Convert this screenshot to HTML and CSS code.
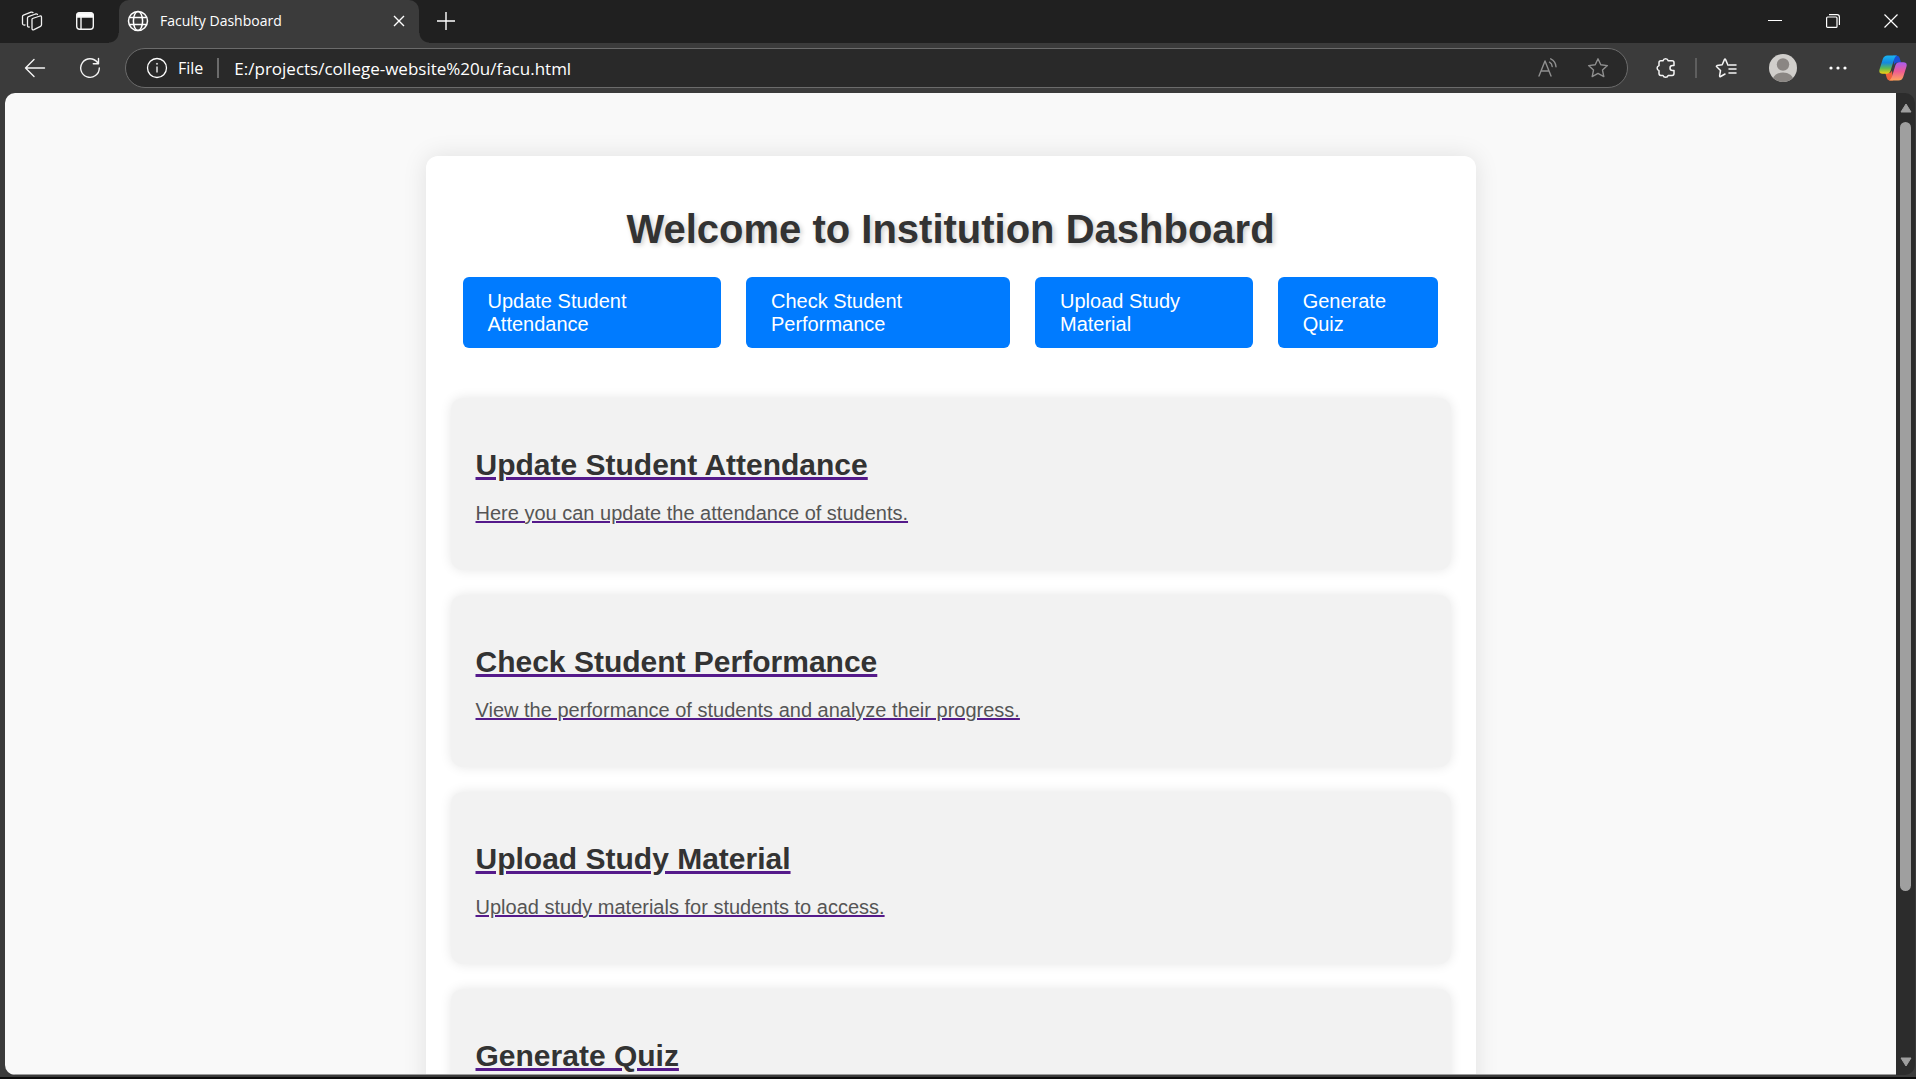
FILE: index.html
```
<!DOCTYPE html>
<html lang="en">
<head>
    <meta charset="UTF-8">
    <meta name="viewport" content="width=device-width, initial-scale=1.0">
    <title>Faculty Dashboard</title>
    <link rel="stylesheet" href="styles.css">
</head>
<body>

    <!-- Tab strip -->
    <div class="tab-strip">
        <div class="strip-buttons">
            <button class="icon-button" aria-label="Workspaces">
                <svg width="22" height="22" viewBox="0 0 22 22" fill="none" stroke="#f0f0f0" stroke-width="1.3" stroke-linejoin="round" stroke-linecap="round">
                    <path d="M11.5 8.5 19 6q1.5-.4 1.5 1.2v7.6q0 1-1 1.500L13 19.600q-2 .7-2-1.200V9.500q0-.7.5-1z"/>
                    <path d="M8.200 17c-1.200.2-1.700-.4-1.700-1.500V8q0-1 1-1.400L14.500 4q1.500-.4 2 .5"/>
                    <path d="M4 15c-1.500.3-2.500-.3-2.500-1.500V6.500q0-1 1-1.400L10 2.200q1.400-.4 2 .4"/>
                </svg>
            </button>
            <button class="icon-button" aria-label="Tab actions">
                <svg width="20" height="20" viewBox="0 0 20 20" fill="none" stroke="#f5f5f5" stroke-width="1.4">
                    <rect x="1.7" y="1.7" width="16.6" height="16.6" rx="3"/>
                    <path d="M2 4.500Q2 2 4.500 2h11Q18 2 18 4.500V6H2z" fill="#fff"/>
                    <path d="M6 6v12"/>
                </svg>
            </button>
        </div>
        <div class="tab">
            <svg width="22" height="22" viewBox="0 0 22 22" fill="none" stroke="#fff" stroke-width="1.5">
                <circle cx="11" cy="11" r="9.5"/>
                <ellipse cx="11" cy="11" rx="4.6" ry="9.5"/>
                <path d="M2.200 7.500h17.600M2.200 14.500h17.600"/>
            </svg>
            <span class="tab-title">Faculty Dashboard</span>
            <button class="icon-button tab-close" aria-label="Close tab">
                <svg width="12" height="12" viewBox="0 0 12 12" stroke="#fff" stroke-width="1.4"><path d="M1 1l10 10M11 1L1 11"/></svg>
            </button>
        </div>
        <button class="icon-button new-tab" aria-label="New tab">
            <svg width="18" height="18" viewBox="0 0 18 18" stroke="#fff" stroke-width="1.4"><path d="M9 0v18M0 9h18"/></svg>
        </button>
        <div class="window-buttons">
            <button class="icon-button" aria-label="Minimize">
                <svg width="14" height="14" viewBox="0 0 14 14" stroke="#fff"><path d="M0 6.500h14"/></svg>
            </button>
            <button class="icon-button" aria-label="Restore">
                <svg width="14" height="14" viewBox="0 0 14 14" fill="none" stroke="#fff" stroke-width="1.2">
                    <rect x=".6" y="3" width="10.4" height="10.4" rx="1"/>
                    <path d="M3 .7h8q2.400 0 2.400 2.400v8"/>
                </svg>
            </button>
            <button class="icon-button" aria-label="Close">
                <svg width="14" height="14" viewBox="0 0 14 14" stroke="#fff" stroke-width="1.2"><path d="M.5.5l13 13M13.500.5l-13 13"/></svg>
            </button>
        </div>
    </div>

    <!-- Address bar -->
    <div class="toolbar">
        <button class="icon-button" aria-label="Back">
            <svg width="22" height="20" viewBox="0 0 22 20" fill="none" stroke="#f5f5f5" stroke-width="1.4" stroke-linecap="round" stroke-linejoin="round"><path d="M20.500 10h-19M10 1.500 1.500 10l8.500 8.500"/></svg>
        </button>
        <button class="icon-button" aria-label="Refresh">
            <svg width="22" height="22" viewBox="0 0 22 22" fill="none" stroke="#f5f5f5" stroke-width="1.4" stroke-linecap="round" stroke-linejoin="round"><path d="M20.300 11A9.300 9.300 0 1 1 18.500 5.500M19.500 1.500v5.200h-5.200"/></svg>
        </button>
        <div class="address-bar">
            <svg width="22" height="22" viewBox="0 0 22 22" fill="none" stroke="#fff" stroke-width="1.3">
                <circle cx="11" cy="11" r="9.5"/>
                <path d="M11 9.500v6"/>
                <circle cx="11" cy="6.8" r=".6" fill="#fff" stroke-width=".6"/>
            </svg>
            <label class="scheme" for="url">File</label>
            <input class="url" id="url" type="text" value="E:/projects/college-website%20u/facu.html">
            <button class="icon-button" aria-label="Read aloud">
                <svg width="22" height="22" viewBox="0 0 22 22" fill="none" stroke="#8f8f8f" stroke-width="1.4" stroke-linecap="round" stroke-linejoin="round">
                    <path d="M2 19 8 4l6 15M4 14h8"/>
                    <path d="M12.500 5.200q2.500 1.300 2.700 4.300M13.700 1.800q5 2.300 5.300 8"/>
                </svg>
            </button>
            <button class="icon-button" aria-label="Favorite">
                <svg width="22" height="22" viewBox="0 0 22 22" fill="none" stroke="#8f8f8f" stroke-width="1.4" stroke-linejoin="round"><path d="M11 1.800l2.800 6 6.600.8-4.900 4.500 1.300 6.500-5.800-3.200-5.800 3.200 1.300-6.500L1.600 8.600l6.600-.8z"/></svg>
            </button>
        </div>
        <div class="tools">
            <button class="icon-button" aria-label="Extensions">
                <svg width="22" height="22" viewBox="0 0 22 22" fill="none" stroke="#f5f5f5" stroke-width="1.5" stroke-linejoin="round"><path d="M8 3.800a2.700 2.700 0 0 1 5.200 0h4q1.800 0 1.800 1.800v3h-1.500a2.500 2.500 0 0 0 0 5H19v3q0 1.800-1.800 1.800h-4a2.700 2.700 0 0 1-5.200 0H5.800Q4 18.400 4 16.600v-3a2.600 2.600 0 0 1 0-5v-3q0-1.800 1.800-1.800z"/></svg>
            </button>
            <span class="divider"></span>
            <button class="icon-button" aria-label="Favorites list">
                <svg width="22" height="22" viewBox="0 0 22 22" fill="none" stroke="#f5f5f5" stroke-width="1.5" stroke-linecap="round" stroke-linejoin="round">
                    <path d="M13 8.200 10.600 2.600Q10 1.600 9.400 2.600L7.200 7.800l-5.200.8q-1 .4-.3 1.200L5.500 13.500l-.9 5.300q0 1.200 1 .7L10 17"/>
                    <path d="M14 8h7M14 12h7M14 16h7"/>
                </svg>
            </button>
            <button class="icon-button" aria-label="Profile">
                <svg width="28" height="28" viewBox="0 0 28 28">
                    <clipPath id="face"><circle cx="14" cy="14" r="14"/></clipPath>
                    <g clip-path="url(#face)">
                        <rect width="28" height="28" fill="#d0cecb"/>
                        <circle cx="14" cy="10.5" r="6.2" fill="#8a8683"/>
                        <ellipse cx="14" cy="26.5" rx="10.5" ry="8" fill="#8a8683"/>
                    </g>
                </svg>
            </button>
            <button class="icon-button" aria-label="Settings and more">
                <svg width="18" height="4" viewBox="0 0 18 4" fill="#fff"><circle cx="2" cy="2" r="1.6"/><circle cx="9" cy="2" r="1.6"/><circle cx="16" cy="2" r="1.6"/></svg>
            </button>
            <button class="icon-button" aria-label="Copilot">
                <svg width="28" height="28" viewBox="0 0 28 28">
                    <defs>
                        <linearGradient id="cool" x1="0" y1="0" x2="0" y2="1"><stop offset="0" stop-color="#19b5f0"/><stop offset=".4" stop-color="#1488e0"/><stop offset=".7" stop-color="#5cba55"/><stop offset="1" stop-color="#f5cf10"/></linearGradient>
                        <linearGradient id="warm" x1="0" y1="0" x2="0" y2="1"><stop offset="0" stop-color="#a85cf0"/><stop offset=".5" stop-color="#ee5a94"/><stop offset="1" stop-color="#ffa45c"/></linearGradient>
                    </defs>
                    <path d="M14 1.500h3.500q2.500 0 3.200 2.500l1.300 4.500h-4q-2 0-3 2.500z" fill="#1a50d4"/>
                    <path d="M14 26.500h-3q-2.500 0-3.200-2.500L6.300 19H10q2 0 3-2.500z" fill="#f0603c"/>
                    <path d="M8.500 1.500H18q-2 .8-2.800 3.500L11.500 17q-.9 2.700-3.500 2.700H3.500Q-.5 19.700.5 15.500L3.800 5Q5 1.500 8.500 1.500z" fill="url(#cool)"/>
                    <path d="M19.500 26.500H10q2-.8 2.800-3.500L16.500 11q.9-2.700 3.500-2.700h4.500q4 0 3 4.200L24.200 23q-1.200 3.500-4.700 3.500z" fill="url(#warm)"/>
                </svg>
            </button>
        </div>
    </div>

    <!-- Page -->
    <div class="viewport">
        <main class="page">
            <div class="container">
                <h1>Welcome to Institution Dashboard</h1>
                <nav class="menu">
                    <a href="#attendance">Update Student Attendance</a>
                    <a href="#performance">Check Student Performance</a>
                    <a href="#material">Upload Study Material</a>
                    <a href="#quiz">Generate Quiz</a>
                </nav>
                <section class="card" id="attendance">
                    <a href="attendance.html">
                        <h2>Update Student Attendance</h2>
                        <p>Here you can update the attendance of students.</p>
                    </a>
                </section>
                <section class="card" id="performance">
                    <a href="performance.html">
                        <h2>Check Student Performance</h2>
                        <p>View the performance of students and analyze their progress.</p>
                    </a>
                </section>
                <section class="card" id="material">
                    <a href="material.html">
                        <h2>Upload Study Material</h2>
                        <p>Upload study materials for students to access.</p>
                    </a>
                </section>
                <section class="card" id="quiz">
                    <a href="quiz.html">
                        <h2>Generate Quiz</h2>
                    </a>
                </section>
            </div>
        </main>
        <div class="scrollbar">
            <svg width="12" height="10" viewBox="0 0 12 10" fill="#9f9f9f" stroke="#9f9f9f" stroke-linejoin="round"><path d="M6 1l5 8H1z"/></svg>
            <div class="track"><div class="thumb"></div></div>
            <svg width="12" height="10" viewBox="0 0 12 10" fill="#9f9f9f" stroke="#9f9f9f" stroke-linejoin="round"><path d="M6 9l5-8H1z"/></svg>
        </div>
    </div>

</body>
</html>
```
FILE: styles.css
```
* {
    box-sizing: border-box;
}
body {
    margin: 0;
    height: 100vh;
    display: flex;
    flex-direction: column;
    overflow: hidden;
    background: #3b3b3b;
    border-bottom: 2px solid #0c0c0c;
    font-family: "Liberation Sans", Arial, sans-serif;
}
.icon-button {
    display: flex;
    align-items: center;
    justify-content: center;
    padding: 0;
    border: none;
    background: none;
    cursor: pointer;
}
svg {
    display: block;
    flex: none;
}

/* Tab strip */
.tab-strip {
    display: flex;
    height: 43px;
    flex: none;
    padding-bottom: 1px;
    background: linear-gradient(#202020, #202020);
    color: #fff;
    font-family: "Open Sans", "Noto Sans", sans-serif;
}
.strip-buttons {
    display: flex;
    align-items: center;
    gap: 32px;
    width: 119px;
    padding-left: 21px;
}
.tab {
    position: relative;
    display: flex;
    align-items: center;
    gap: 11px;
    width: 300px;
    margin-bottom: -1px;
    padding: 0 14px 2px 8px;
    background: #3b3b3b;
    border-radius: 10px 10px 0 0;
    font-size: 14px;
}
/* curved feet on both sides of the active tab */
.tab::before,
.tab::after {
    content: "";
    position: absolute;
    bottom: 0;
    width: 10px;
    height: 10px;
}
.tab::before {
    left: -10px;
    background: radial-gradient(circle at 0 0, #202020 9px, #3b3b3b 10px);
}
.tab::after {
    right: -10px;
    background: radial-gradient(circle at 100% 0, #202020 9px, #3b3b3b 10px);
}
.tab-close {
    margin-left: auto;
}
.new-tab {
    margin-left: 18px;
}
.window-buttons {
    display: flex;
    gap: 44px;
    margin-left: auto;
    padding-right: 18px;
}

/* Toolbar */
.toolbar {
    display: flex;
    align-items: center;
    height: 50px;
    flex: none;
    gap: 33px;
    padding: 0 9px 0 24px;
    color: #fff;
    font-family: "Open Sans", "Noto Sans", sans-serif;
    font-size: 16px;
}
.address-bar {
    display: flex;
    align-items: center;
    flex: 1;
    height: 40px;
    margin-left: -9px;
    padding: 0 18px 0 20px;
    background: #292929;
    border: 1px solid #6b6b6b;
    border-radius: 20px;
}
.address-bar .icon-button + .icon-button {
    margin-left: 28px;
}
.scheme {
    margin-left: 10px;
    padding-right: 14px;
    border-right: 2px solid #6b6b6b;
    line-height: 20px;
}
.url {
    flex: 1;
    min-width: 0;
    padding: 0 0 0 15px;
    border: none;
    outline: none;
    background: none;
    color: #fff;
    font-family: inherit;
    font-size: 17px;
}
.tools {
    display: flex;
    align-items: center;
    gap: 32px;
    margin-left: -6px;
}
.divider {
    width: 2px;
    height: 20px;
    margin: 0 -14px 0 -14px;
    background: #5e5e5e;
}

/* Page */
.viewport {
    display: flex;
    flex: 1;
    min-height: 0;
    margin: 0 1px 2px 5px;
    border-radius: 10px;
    overflow: hidden;
    background: #2c2c2c;
}
.page {
    flex: 1;
    overflow: hidden;
    padding: 63px 25px 0;
    background: #f9f9f9;
    border-bottom: 1px solid #9c9c9c;
}
.container {
    max-width: 1050px;
    margin: 0 auto;
    padding: 25px;
    background: #fff;
    border-radius: 12px;
    box-shadow: 0 0 25px rgba(0, 0, 0, 0.1);
}
h1 {
    margin: 25px 0;
    color: #333;
    font-size: 40px;
    line-height: 46px;
    text-align: center;
    text-shadow: 2px 2px 5px rgba(0, 0, 0, 0.2);
}
.menu {
    display: flex;
    justify-content: center;
    gap: 25px;
    margin-bottom: 50px;
    padding: 0 12px;
}
.menu a {
    padding: 13px 25px 12px;
    background: #007bff;
    color: #fff;
    border-radius: 6px;
    font-size: 20px;
    line-height: 23px;
    text-decoration: none;
}
.card {
    margin-bottom: 25px;
    padding: 25px;
    background: #f2f2f2;
    border-radius: 12px;
    box-shadow: 0 0 12px rgba(0, 0, 0, 0.1);
}
.card a {
    color: #551a8b;
    display: flow-root;
}
.card h2 {
    margin: 25px 0 12px;
    color: #333;
    font-size: 30px;
    line-height: 34px;
}
.card p {
    margin: 20px 0;
    color: #555;
    font-size: 20px;
    line-height: 23px;
}

/* Scrollbar */
.scrollbar {
    display: flex;
    flex-direction: column;
    align-items: center;
    width: 19px;
    padding: 10px 0 8px;
}
.track {
    flex: 1;
    padding: 9px 0;
}
.thumb {
    width: 11px;
    height: 83%;
    background: #9f9f9f;
    border-radius: 6px;
}
```
